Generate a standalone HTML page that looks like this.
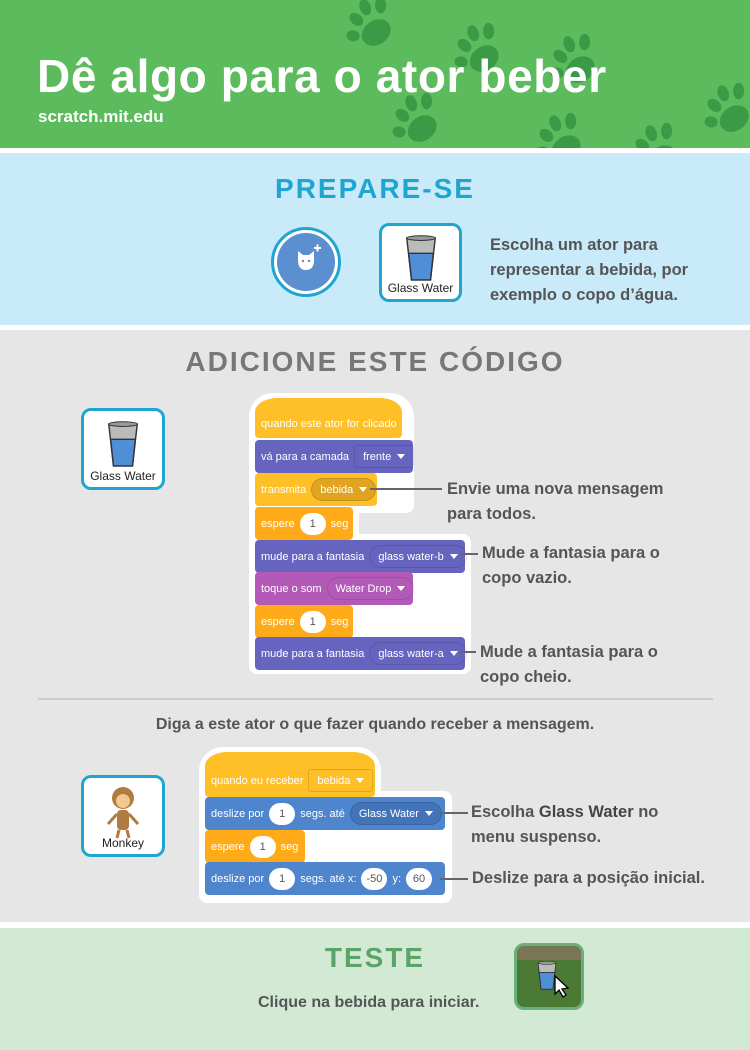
<!DOCTYPE html>
<html><head><meta charset="utf-8"><style>
*{margin:0;padding:0;box-sizing:border-box}
body{width:750px;height:1050px;background:#fff;font-family:"Liberation Sans",sans-serif;position:relative;overflow:hidden}
.abs{position:absolute}
.sec{position:absolute;left:0;width:750px}
.h2{position:absolute;width:750px;text-align:center;font-weight:900;font-size:28px;letter-spacing:2px;font-family:"Liberation Sans",sans-serif}
.txt{position:absolute;color:#555;font-size:16.5px;line-height:25px;font-weight:bold}
.blk{position:absolute;height:33px;border-radius:4px;color:#fff;font-size:11px;display:flex;align-items:center;padding-left:6px;gap:5px;white-space:nowrap}
.blk.hat{border-radius:22px 22px 4px 4px/14px 14px 4px 4px}
.y{background:#ffbf26}.o{background:#ffab19}.p{background:#6764c0}.m{background:#b35ab8}.b{background:#4f85cc}
.inp{background:#fff;color:#555;border-radius:12px;height:22px;min-width:26px;padding:0 8px;display:flex;align-items:center;justify-content:center}
.dd{border-radius:12px;height:23px;padding:0 8px;display:flex;align-items:center;gap:6px;border:1px solid rgba(0,0,0,.12)}
.dd:after{content:"";border:4px solid transparent;border-top:5px solid #fff;margin-top:4px}
.line{position:absolute;height:2px;background:#666}
.card{position:absolute;border:3px solid #1fa6d0;border-radius:10px;background:#fff}
.card span{position:absolute;bottom:4px;width:100%;text-align:center;font-size:12px;color:#222}
</style></head><body>
<svg width="0" height="0" style="position:absolute"><defs><g id="paw" fill="#3a9a45"><ellipse cx="2" cy="6" rx="14" ry="11" transform="rotate(-35 2 6)"/><ellipse cx="-16" cy="-6" rx="5" ry="7" transform="rotate(-50 -16 -6)"/><ellipse cx="-8" cy="-17" rx="5" ry="7.5" transform="rotate(-20 -8 -17)"/><ellipse cx="6" cy="-19" rx="5" ry="7.5"/><ellipse cx="-19" cy="9" rx="5" ry="6" transform="rotate(-80 -19 9)"/></g>
<g id="glass"><path d="M-15,-22 L15,-22 L10,22 L-10,22Z" fill="#bbb" stroke="#333" stroke-width="1.5"/><path d="M-13,-6 L13,-6 L10,22 L-10,22Z" fill="#4f8fd8" stroke="#333" stroke-width="1.5"/><ellipse cx="0" cy="-22" rx="15" ry="2.5" fill="#999" stroke="#333" stroke-width="1"/></g></defs></svg>

<div class="sec" style="top:0;height:148px;background:#5cbb5c;overflow:hidden">
<svg width="750" height="148" class="abs" style="left:0;top:0">
<use href="#paw" transform="translate(374,26) scale(1.1)"/><use href="#paw" transform="translate(482,52) scale(1.1)"/><use href="#paw" transform="translate(578,63) scale(1.1)"/><use href="#paw" transform="translate(420,122) scale(1.1)"/><use href="#paw" transform="translate(564,142) scale(1.1)"/><use href="#paw" transform="translate(660,152) scale(1.1)"/><use href="#paw" transform="translate(732,112) scale(1.1)"/>
</svg>
<div class="abs" style="left:37px;top:49px;color:#fff;font-size:46px;font-weight:900;letter-spacing:0.6px;font-family:'Liberation Sans',sans-serif">Dê algo para o ator beber</div>
<div class="abs" style="left:38px;top:107px;color:#fff;font-size:17px;font-weight:bold">scratch.mit.edu</div>
</div>

<div class="sec" style="top:153px;height:172px;background:#c9eaf8">
<div class="h2" style="top:20px;color:#1fa6d0">PREPARE-SE</div>
<div class="abs" style="left:271px;top:74px;width:70px;height:70px;border-radius:50%;border:3px solid #1fa6d0;background:#fff;padding:3px"><div style="width:58px;height:58px;border-radius:50%;background:#5c8fd0;position:relative"><svg width="58" height="58"><path d="M21,27 L21,18 L26,22 L32,22 L37,18 L37,27 Q37,37 29,37 Q21,37 21,27Z" fill="#fff"/><circle cx="26" cy="28" r="1.2" fill="#5c8fd0"/><circle cx="32" cy="28" r="1.2" fill="#5c8fd0"/><path d="M37,15 h7 M40.5,11.5 v7" stroke="#fff" stroke-width="2"/></svg></div></div>
<div class="card" style="left:379px;top:70px;width:83px;height:79px"><svg width="77" height="60" class="abs" style="left:0;top:3px"><use href="#glass" transform="translate(39,30) scale(.95)"/></svg><span>Glass Water</span></div>
<div class="txt" style="left:490px;top:80px">Escolha um ator para<br>representar a bebida, por<br>exemplo o copo d’água.</div>
</div>

<div class="sec" style="top:330px;height:592px;background:#e6e6e6">
<div class="h2" style="top:16px;color:#777">ADICIONE ESTE CÓDIGO</div>
<div class="card" style="left:81px;top:78px;width:84px;height:82px"><svg width="78" height="62" class="abs" style="left:0;top:3px"><use href="#glass" transform="translate(39,31) scale(.95)"/></svg><span>Glass Water</span></div>
<div class="abs" style="left:38px;top:368px;width:675px;height:2px;background:#ccc"></div>
<div class="txt" style="left:0;width:750px;text-align:center;top:382px;font-size:16px">Diga a este ator o que fazer quando receber a mensagem.</div>
<div class="card" style="left:81px;top:445px;width:84px;height:82px"><svg width="78" height="60" class="abs" style="left:0;top:2px"><circle cx="39" cy="18" r="11" fill="#b07a40"/><circle cx="39" cy="21" r="7" fill="#f0c890"/><rect x="33" y="30" width="12" height="20" rx="4" fill="#b07a40"/><path d="M33,34 L24,44 M45,34 L54,44 M35,50 L33,58 M43,50 L45,58" stroke="#b07a40" stroke-width="3"/></svg><span>Monkey</span></div>
</div>

<div class="sec" style="top:928px;height:122px;background:#d2ead4">
<div class="h2" style="top:14px;color:#5aa46a">TESTE</div>
<div class="txt" style="left:258px;top:62px;font-size:16px">Clique na bebida para iniciar.</div>
<div class="abs" style="left:514px;top:15px;width:70px;height:67px;border:3px solid #6bb07c;border-radius:10px;background:#4a7a34;overflow:hidden"><div style="position:absolute;left:0;top:0;width:70px;height:14px;background:#7a7555"></div><svg width="64" height="61" class="abs"><use href="#glass" transform="translate(30,30) scale(.6)"/><path d="M38,30 L38,48 L42,44 L46,51 L49,49 L45,43 L51,42Z" fill="#fff" stroke="#000" stroke-width="1.3"/></svg></div>
</div>

<div class="abs" style="left:249px;top:393px;width:165px;height:120px;background:#fff;border-radius:24px 24px 8px 8px"></div>
<div class="abs" style="left:249px;top:500px;width:110px;height:45px;background:#fff;border-radius:6px"></div>
<div class="abs" style="left:249px;top:534px;width:222px;height:140px;background:#fff;border-radius:8px"></div>
<div class="blk hat y" style="left:255px;top:398px;width:147px;height:40px;padding-top:12px">quando este ator for clicado</div>
<div class="blk p" style="left:255px;top:440px;width:158px">vá para a camada <div class="dd" style="border-radius:3px">frente</div></div>
<div class="blk y" style="left:255px;top:473px;width:122px">transmita <div class="dd" style="background:#e0a420">bebida</div></div>
<div class="blk o" style="left:255px;top:507px;width:98px">espere <div class="inp">1</div> seg</div>
<div class="blk p" style="left:255px;top:540px;width:210px">mude para a fantasia <div class="dd">glass water-b</div></div>
<div class="blk m" style="left:255px;top:572px;width:158px">toque o som <div class="dd">Water Drop</div></div>
<div class="blk o" style="left:255px;top:605px;width:98px">espere <div class="inp">1</div> seg</div>
<div class="blk p" style="left:255px;top:637px;width:210px">mude para a fantasia <div class="dd">glass water-a</div></div>

<div class="line" style="left:370px;top:488px;width:72px"></div>
<div class="txt" style="left:447px;top:477px">Envie uma nova mensagem<br>para todos.</div>
<div class="line" style="left:460px;top:553px;width:18px"></div>
<div class="txt" style="left:482px;top:541px">Mude a fantasia para o<br>copo vazio.</div>
<div class="line" style="left:460px;top:651px;width:16px"></div>
<div class="txt" style="left:480px;top:640px">Mude a fantasia para o<br>copo cheio.</div>

<div class="abs" style="left:199px;top:747px;width:182px;height:56px;background:#fff;border-radius:24px 24px 8px 8px"></div>
<div class="abs" style="left:199px;top:791px;width:253px;height:112px;background:#fff;border-radius:8px"></div>
<div class="blk hat y" style="left:205px;top:752px;width:170px;height:45px;padding-top:12px">quando eu receber <div class="dd" style="border-radius:3px">bebida</div></div>
<div class="blk b" style="left:205px;top:797px;width:240px">deslize por <div class="inp">1</div> segs. até <div class="dd" style="background:#4373b8">Glass Water</div></div>
<div class="blk o" style="left:205px;top:830px;width:100px">espere <div class="inp">1</div> seg</div>
<div class="blk b" style="left:205px;top:862px;width:240px">deslize por <div class="inp">1</div> segs. até x: <div class="inp" style="padding:0 5px">-50</div> y: <div class="inp" style="padding:0 5px">60</div></div>
<div class="line" style="left:440px;top:812px;width:28px"></div>
<div class="txt" style="left:471px;top:800px">Escolha <span style="color:#444;font-weight:900">Glass Water</span> no<br>menu suspenso.</div>
<div class="line" style="left:440px;top:878px;width:28px"></div>
<div class="txt" style="left:472px;top:866px">Deslize para a posição inicial.</div>
</body></html>
